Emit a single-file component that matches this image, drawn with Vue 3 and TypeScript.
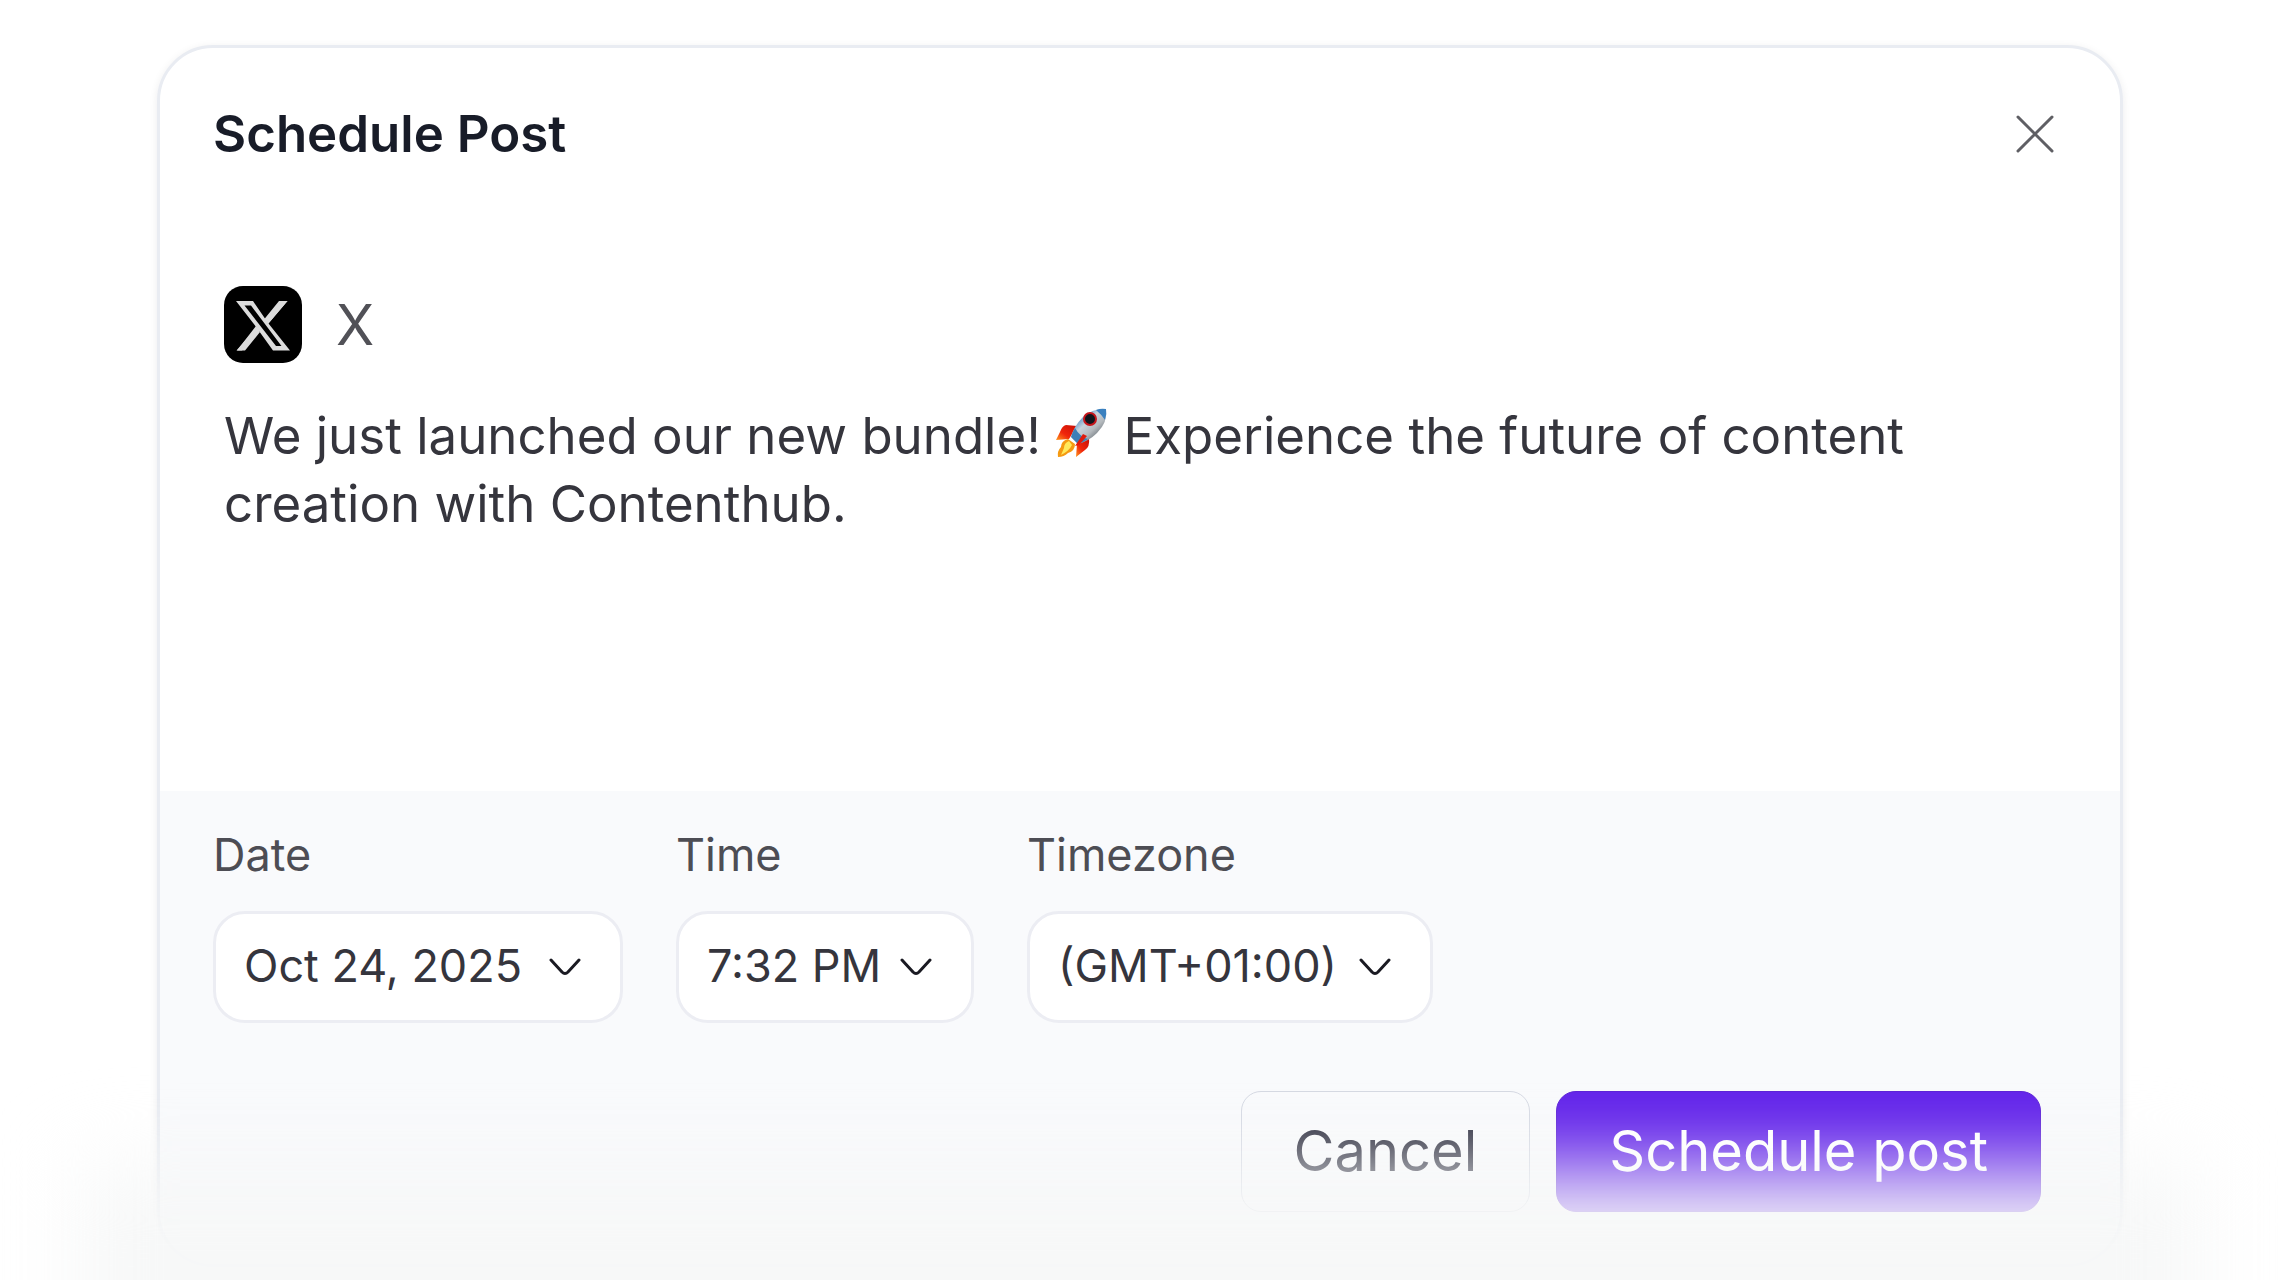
<script setup lang="ts">
import { ref } from 'vue'

interface Field {
  id: string
  label: string
  options: string[]
}

const fields: Field[] = [
  { id: 'date', label: 'Date', options: ['Oct 24, 2025'] },
  { id: 'time', label: 'Time', options: ['7:32 PM'] },
  { id: 'timezone', label: 'Timezone', options: ['(GMT+01:00)'] },
]

const values = ref<Record<string, string>>({
  date: 'Oct 24, 2025',
  time: '7:32 PM',
  timezone: '(GMT+01:00)',
})
</script>

<template>
  <main class="page">
    <section class="card" role="dialog" aria-labelledby="dialog-title">
      <header class="head">
        <h1 id="dialog-title" class="title">Schedule Post</h1>
        <button class="close" type="button" aria-label="Close">
          <svg viewBox="0 0 40 40" width="40" height="40" aria-hidden="true">
            <path d="M3 3 L37 37 M37 3 L3 37" fill="none" stroke="#5f5f64" stroke-width="3" stroke-linecap="round" />
          </svg>
        </button>
      </header>

      <div class="post">
        <div class="network">
          <svg class="logo" viewBox="0 0 78 77" width="78" height="77" aria-hidden="true">
            <rect width="78" height="77" rx="19" fill="#000" />
            <path
              fill="#dcdcdc"
              fill-rule="evenodd"
              d="M12 15 H29 L42 34 L58 15 H63.500 L44.500 37.500 L66 64.500 H49 L35 45 L18 64.500 H12.500 L32.500 41.500 Z M20.500 19.500 L52 60 H57.500 L27 19.500 Z"
            />
            <path d="M55 15 H63.500 L43.500 38.500 L40 33.500 Z M32 40 L36 46 L21 64.500 H13 Z" fill="#dcdcdc" />
          </svg>
          <span class="network-name">X</span>
        </div>
        <p class="message">
          We just launched our new bundle!
          <svg class="rocket" viewBox="0 0 54 50" width="54" height="50" role="img" aria-label="rocket">
            <defs>
              <linearGradient id="hull" x1="0.200" y1="0.200" x2="0.800" y2="0.850">
                <stop offset="0" stop-color="#3f86c4" />
                <stop offset="0.350" stop-color="#c9d3dc" />
                <stop offset="0.650" stop-color="#b4b9bd" />
                <stop offset="1" stop-color="#5d666e" />
              </linearGradient>
              <linearGradient id="fin" x1="0" y1="1" x2="1" y2="0">
                <stop offset="0" stop-color="#ff9a1f" />
                <stop offset="0.400" stop-color="#f0260c" />
                <stop offset="1" stop-color="#c80d05" />
              </linearGradient>
            </defs>
            <path d="M22 18 L11 17 Q7 18 5 24 L1 32 L14 31 Z" fill="url(#fin)" />
            <path d="M34 30 Q35 39 30 42 L21 49 L22 36 Z" fill="url(#fin)" />
            <path d="M13 31 Q6 33 6 39 Q2 43 3 49 Q9 49 13 45 Q20 43 20 36 Z" fill="#f59a12" />
            <path d="M14 33 Q9 35 9 40 L6 47 Q14 43 17 37 Z" fill="#ffe95c" />
            <path d="M51 1 Q38 0 28 9 Q19 18 16 29 L23 36 Q34 33 42 25 Q53 14 51 1 Z" fill="url(#hull)" />
            <path d="M51 1 Q46 0 41 2 Q46 6 50 12 Q52 6 51 1 Z" fill="#3a80bf" />
            <path d="M20 20 Q17 25 16 29 L23 36 Q29 34 33 31 Q25 29 20 20 Z" fill="#3d7fb8" />
            <circle cx="35" cy="11" r="6" fill="#10151c" stroke="#c5151b" stroke-width="2" />
            <path d="M28 26 L20 38 L24 37 L32 28 Z" fill="#e01a0c" />
          </svg>
          Experience the future of content <wbr />creation with Contenthub.
        </p>
      </div>

      <footer class="foot">
        <div class="fields">
          <div v-for="field in fields" :key="field.id" class="field" :class="field.id">
            <label class="label" :for="field.id">{{ field.label }}</label>
            <div class="control">
              <select :id="field.id" v-model="values[field.id]" class="select">
                <option v-for="option in field.options" :key="option" :value="option">{{ option }}</option>
              </select>
              <svg class="chevron" viewBox="0 0 32 18" width="32" height="18" aria-hidden="true">
                <path d="M2 2 L13 14 Q16 17 19 14 L30 2" fill="none" stroke="#1a1a22" stroke-width="3" stroke-linecap="round" />
              </svg>
            </div>
          </div>
        </div>
        <div class="actions">
          <button class="button cancel" type="button">Cancel</button>
          <button class="button submit" type="button">Schedule post</button>
        </div>
      </footer>
    </section>
    <div class="fade" aria-hidden="true"></div>
  </main>
</template>

<style>
body {
  margin: 0;
  background: #fff;
}
</style>

<style scoped>
.page {
  position: relative;
  box-sizing: border-box;
  min-height: 100vh;
  padding: 45px 157px 12px;
  overflow: hidden;
  background: #fff;
  font-family: Inter, "Liberation Sans", sans-serif;
  color: #35353d;
}

.card {
  overflow: hidden;
  border: 3px solid #e9ecf2;
  border-radius: 56px;
  background: #fff;
  box-shadow: 0 2px 8px rgba(20, 20, 40, 0.08);
}

.head {
  display: flex;
  align-items: center;
  justify-content: space-between;
  padding: 52px 65px 0 53px;
}

.title {
  margin: 0;
  font-size: 51px;
  line-height: 68px;
  font-weight: 600;
  color: #181c28;
}

.close {
  display: flex;
  padding: 0;
  border: 0;
  background: none;
}

.post {
  box-sizing: border-box;
  min-height: 623px;
  padding: 118px 64px 0;
}

.network {
  display: flex;
  align-items: center;
  gap: 34px;
}

.network-name {
  font-size: 56px;
  line-height: 76px;
  color: #515157;
}

.message {
  margin: 39px 0 0;
  font-size: 51px;
  line-height: 68px;
}

.rocket {
  vertical-align: -4px;
}

.foot {
  padding: 40px 79px 52px 53px;
  background: #f9fafc;
}

.fields {
  display: flex;
  gap: 53px;
}

.date {
  width: 410px;
}

.time {
  width: 298px;
}

.timezone {
  width: 406px;
}

.label {
  display: block;
  margin-bottom: 32px;
  font-size: 45px;
  line-height: 48px;
  color: #4d4d54;
}

.control {
  position: relative;
}

.select {
  display: block;
  box-sizing: border-box;
  width: 100%;
  height: 112px;
  margin: 0;
  padding: 0 76px 4px 28px;
  border: 3px solid #ecedf3;
  border-radius: 32px;
  background: #fff;
  font: inherit;
  font-size: 45px;
  color: #35353d;
  appearance: none;
}

.chevron {
  position: absolute;
  top: 47px;
  right: 42px;
  pointer-events: none;
}

.actions {
  display: flex;
  justify-content: flex-end;
  gap: 26px;
  margin-top: 68px;
}

.button {
  box-sizing: border-box;
  height: 121px;
  padding: 0 52px 2px;
  border: 1px solid #d5d9e3;
  border-radius: 20px;
  font: inherit;
  font-size: 56px;
}

.cancel {
  background: #f9fafc;
  color: #2c2d3e;
}

.submit {
  border-color: #5a1fd6;
  background: #6020ea;
  color: #fff;
}

.fade {
  position: absolute;
  right: 80px;
  bottom: -200px;
  left: 80px;
  height: 313px;
  background: rgba(247, 248, 248, 0.95);
  filter: blur(42px);
  pointer-events: none;
}
</style>
